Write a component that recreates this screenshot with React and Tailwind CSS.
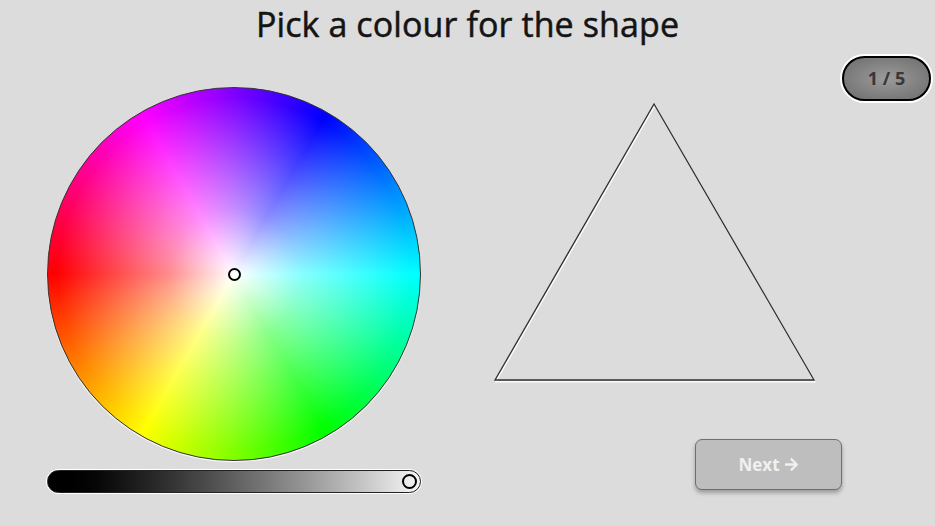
import { FaArrowRight } from 'react-icons/fa';

const Wheel = () => (
  <div className="relative w-[374px] h-[374px] rounded-full border border-[#333] shadow-[0_1px_1px_#ffffff] bg-[conic-gradient(from_0deg,#8000ff,#0000ff_30deg,#00ffff_90deg,#00ff00_150deg,#ffff00_210deg,#ff0000_270deg,#ff00ff_330deg,#8000ff_360deg)]">
    <div className="absolute inset-0 rounded-full bg-[radial-gradient(circle_closest-side,#ffffff_0%,rgba(255,255,255,0.55)_35%,rgba(255,255,255,0)_95%)]" />
    {/* picker handle */}
    <div className="absolute left-[180px] top-[180px] w-[13px] h-[13px] rounded-full border-2 border-black" />
  </div>
);

const Slider = () => (
  <div className="w-[374px] h-[23px] rounded-full border border-[#222] shadow-[0_0_0_1px_#ffffff] bg-linear-to-r from-black to-[#f7f7f7] flex items-center justify-end pr-[3px]">
    <div className="w-[15px] h-[15px] rounded-full border-2 border-black" />
  </div>
);

const Triangle = () => (
  <svg width="330" height="283" viewBox="0 0 330 283" className="ml-[69px]">
    <polygon points="164,4 5,280 324,280" fill="none" stroke="#ffffff" strokeWidth="1.2" transform="translate(0.8,0.8)" />
    <polygon points="164,3 5,279 324,279" fill="none" stroke="#2e2e2e" strokeWidth="1.3" />
  </svg>
);

export default function App() {
  return (
    <div className="w-[935px] h-[526px] bg-[#dcdcdc] flex flex-col overflow-hidden font-['Open_Sans',sans-serif]">
      <div className="h-[56px] flex justify-center">
        <h1 className="text-[34px] leading-[48px] tracking-[0.1px] [-webkit-text-stroke:0.5px_#141414] text-[#141414]">Pick a colour for the shape</h1>
      </div>

      <div className="flex">
        <div className="pl-[47px] pt-[31px] flex flex-col gap-[9px]">
          <Wheel />
          <Slider />
        </div>

        <div className="flex-1 flex flex-col">
          <div className="flex justify-end pr-[4px]">
            <div className="w-[89px] h-[45px] rounded-full border-2 border-black shadow-[0_0_0_2px_#ffffff] bg-[radial-gradient(ellipse_at_center,#9b9b9b,#6c6c6c)] flex items-center justify-center text-[18px] font-bold text-[#383838]">
              1 / 5
            </div>
          </div>
          <Triangle />
          <button className="ml-[274px] mt-[55px] w-[147px] h-[51px] rounded-[7px] border border-[#6f6f6f] bg-[#bebebe] shadow-[0_3px_4px_rgba(0,0,0,0.3)] flex items-center justify-center gap-[4px] text-[17px] font-bold text-[#f0f0f0]">
            Next <FaArrowRight className="w-[15px] h-[15px]" />
          </button>
        </div>
      </div>
    </div>
  );
}
